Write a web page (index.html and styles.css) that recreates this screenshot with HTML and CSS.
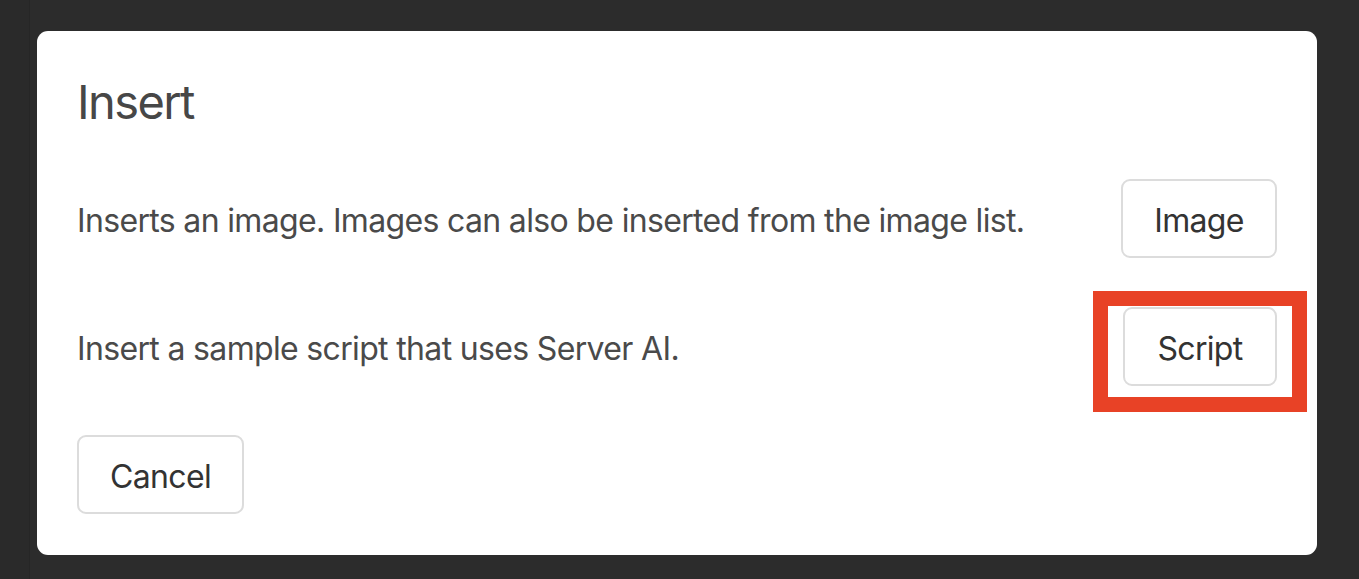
FILE: index.html
```html
<!DOCTYPE html>
<html lang="en">
<head>
<meta charset="utf-8">
<title>Insert</title>
<link rel="stylesheet" href="styles.css">
</head>
<body>
<div class="page">
  <div class="rail"></div>
  <div class="stage">
    <div class="dialog">
      <h1 class="title">Insert</h1>
      <div class="rows">
        <div class="row">
          <p class="desc">Inserts an image. Images can also be inserted from the image list.</p>
          <button class="btn btn-image">Image</button>
        </div>
        <div class="row">
          <p class="desc">Insert a sample script that uses Server AI.</p>
          <div class="mark-wrap">
            <button class="btn btn-script">Script</button>
            <span class="mark"></span>
          </div>
        </div>
        <div class="footer">
          <button class="btn btn-cancel">Cancel</button>
        </div>
      </div>
    </div>
  </div>
</div>
</body>
</html>
```

FILE: styles.css
```css
* { box-sizing: border-box; }

html, body {
  margin: 0;
  padding: 0;
  background: #2c2c2c;
  font-family: Inter, "Noto Sans", "Liberation Sans", sans-serif;
}

.page {
  display: flex;
  width: 1359px;
  height: 579px;
  overflow: hidden;
}

.rail {
  width: 30px;
  flex: none;
  background: #2a2a2a;
  border-right: 1px solid #262626;
}

.stage {
  flex: 1;
  padding: 31px 0 0 7px;
}

.dialog {
  width: 1280px;
  height: 524px;
  background: #ffffff;
  border-radius: 11px;
  padding: 42px 40px 40px 40px;
}

.title {
  margin: 0;
  font-size: 47px;
  line-height: 58px;
  font-weight: 400;
  letter-spacing: -1.6px;
  color: #474747;
}

.rows {
  margin-top: 48px;
  display: flex;
  flex-direction: column;
  gap: 49px;
}

.row {
  display: flex;
  align-items: center;
  justify-content: space-between;
  height: 79px;
}

.desc {
  margin: 0;
  font-size: 32px;
  line-height: 40px;
  letter-spacing: -0.66px;
  color: #4a4a4a;
  padding-top: 4px;
}

.btn {
  font-family: inherit;
  font-size: 32px;
  letter-spacing: -0.66px;
  color: #333333;
  background: #ffffff;
  border: 2px solid #dcdcdc;
  border-radius: 9px;
  height: 79px;
  padding: 3px 30px 0;
  cursor: pointer;
}

.btn-image { width: 156px; }
.btn-script { width: 154px; }
.btn-cancel { width: 167px; }

.mark-wrap {
  position: relative;
  display: flex;
}

.mark {
  position: absolute;
  top: -16px;
  left: -30px;
  right: -30px;
  bottom: -26px;
  border: 15px solid #e84226;
  pointer-events: none;
}

.footer {
  display: flex;
}
```
